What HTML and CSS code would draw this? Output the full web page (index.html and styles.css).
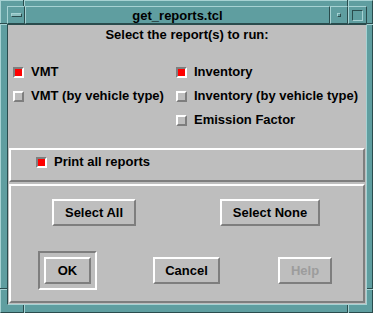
FILE: index.html
```html
<!DOCTYPE html>
<html lang="en">
<head>
    <meta charset="UTF-8">
    <meta name="viewport" content="width=device-width, initial-scale=1.0">
    <title>get_reports.tcl</title>
    <link rel="stylesheet" href="styles.css">
</head>
<body>
    <div class="window">
        <!-- resize handle marks on the window frame -->
        <span class="mark v top left"></span>
        <span class="mark v top right"></span>
        <span class="mark v bottom left"></span>
        <span class="mark v bottom right"></span>
        <span class="mark h side-top left"></span>
        <span class="mark h side-top right"></span>
        <span class="mark h side-bottom left"></span>
        <span class="mark h side-bottom right"></span>

        <div class="titlebar">
            <div class="tb-btn tb-menu"><span class="menu-glyph"></span></div>
            <div class="tb-title">get_reports.tcl</div>
            <div class="tb-btn tb-min"><span class="min-glyph"></span></div>
            <div class="tb-btn tb-max"><span class="max-glyph"></span></div>
        </div>

        <div class="client">
            <div class="heading">Select the report(s) to run:</div>

            <div class="options">
                <div class="opt"><span class="check on"></span><span class="label">VMT</span></div>
                <div class="opt"><span class="check on"></span><span class="label">Inventory</span></div>
                <div class="opt"><span class="check"></span><span class="label">VMT (by vehicle type)</span></div>
                <div class="opt"><span class="check"></span><span class="label">Inventory (by vehicle type)</span></div>
                <div class="opt"></div>
                <div class="opt"><span class="check"></span><span class="label">Emission Factor</span></div>
            </div>

            <div class="frame print-frame">
                <span class="check on"></span><span class="label">Print all reports</span>
            </div>

            <div class="frame actions">
                <div class="btn-row row-select">
                    <button class="btn btn-select-all">Select All</button>
                    <button class="btn btn-select-none">Select None</button>
                </div>
                <div class="btn-row row-dialog">
                    <div class="default-ring"><button class="btn btn-ok">OK</button></div>
                    <button class="btn btn-cancel">Cancel</button>
                    <button class="btn btn-help" disabled>Help</button>
                </div>
            </div>
        </div>
    </div>
</body>
</html>
```

FILE: styles.css
```css
body {
    margin: 0;
    background: #bebebe;
    font-family: 'Liberation Sans', Arial, sans-serif;
    font-size: 13px;
    font-weight: 700;
    color: #000000;
}
.window {
    position: relative;
    width: 373px;
    height: 313px;
    box-sizing: border-box;
    display: flex;
    flex-direction: column;
    background: #5f9ea0;
    border: 1px solid;
    border-color: #a6d2d3 #2a4c4d #2a4c4d #a6d2d3;
    padding: 5px 5px 7px 6px;
}
.mark {
    position: absolute;
    box-sizing: border-box;
}
.mark.v {
    width: 2px;
    border-left: 1px solid #2a4c4d;
    border-right: 1px solid #a6d2d3;
}
.mark.h {
    height: 2px;
    border-top: 1px solid #2a4c4d;
    border-bottom: 1px solid #a6d2d3;
}
.mark.v.top { top: -1px; height: 6px; }
.mark.v.bottom { top: 304px; height: 8px; }
.mark.v.left { left: 22px; }
.mark.v.right { left: 346px; }
.mark.h.side-top { top: 22px; }
.mark.h.side-bottom { top: 287px; }
.mark.h.left { left: -1px; width: 7px; }
.mark.h.right { left: 366px; width: 6px; }

.titlebar {
    display: flex;
    height: 18px;
    flex-shrink: 0;
}
.tb-btn,
.tb-title {
    box-sizing: border-box;
    border: 1px solid;
    border-color: #a6d2d3 #2a4c4d #2a4c4d #a6d2d3;
    display: flex;
    align-items: center;
    justify-content: center;
}
.tb-menu { width: 18px; }
.tb-title {
    flex: 1;
    line-height: 16px;
    padding-top: 1px;
}
.tb-min { width: 18px; }
.tb-max { width: 19px; }
.menu-glyph {
    width: 11px;
    height: 4px;
    box-sizing: border-box;
    border: 1px solid;
    border-color: #a6d2d3 #2a4c4d #2a4c4d #a6d2d3;
    background: #8cc0c1;
}
.min-glyph {
    width: 4px;
    height: 4px;
    box-sizing: border-box;
    border: 1px solid;
    border-color: #a6d2d3 #2a4c4d #2a4c4d #a6d2d3;
}
.max-glyph {
    width: 11px;
    height: 11px;
    box-sizing: border-box;
    border: 1px solid;
    border-color: #2a4c4d #a6d2d3 #a6d2d3 #2a4c4d;
}

.client {
    flex: 1;
    display: flex;
    flex-direction: column;
    background: #bebebe;
    border: 1px solid;
    border-color: #2a4c4d #a6d2d3 #a6d2d3 #2a4c4d;
}
.heading {
    text-align: center;
    line-height: 16px;
    padding-top: 2px;
}
.options {
    display: grid;
    grid-template-columns: 163px 1fr;
    grid-auto-rows: 24px;
    margin-top: 17px;
    padding-left: 5px;
}
.opt {
    display: flex;
    align-items: flex-start;
}
.check {
    width: 11px;
    height: 11px;
    box-sizing: border-box;
    flex-shrink: 0;
    margin-top: 7px;
    border: 2px solid;
    border-color: #ffffff #7e7e7e #7e7e7e #ffffff;
    background: #bebebe;
}
.check.on {
    border-color: #7e7e7e #ffffff #ffffff #7e7e7e;
    background: #ff0000;
}
.label {
    margin-left: 7px;
    margin-top: 4px;
    line-height: 16px;
    white-space: nowrap;
}

.frame {
    box-sizing: border-box;
    border: 2px solid;
    border-color: #ffffff #7e7e7e #7e7e7e #ffffff;
    margin: 0 1px;
}
.print-frame {
    height: 34px;
    margin-top: 16px;
    display: flex;
    align-items: flex-start;
    padding-left: 25px;
}
.actions {
    flex: 1;
    margin-top: 2px;
    margin-bottom: 1px;
    padding-top: 13px;
}
.btn-row {
    display: flex;
    align-items: center;
}
.row-select {
    padding-left: 41px;
    gap: 84px;
}
.row-dialog {
    padding-left: 27px;
    margin-top: 25px;
}
.btn {
    height: 27px;
    box-sizing: border-box;
    padding: 0;
    margin: 0;
    font: inherit;
    color: #000000;
    background: #bebebe;
    border: 2px solid;
    border-color: #ffffff #7e7e7e #7e7e7e #ffffff;
    border-radius: 0;
}
.btn-select-all { width: 84px; }
.btn-select-none { width: 100px; }
.default-ring {
    padding: 4px;
    border: 2px solid;
    border-color: #7e7e7e #ffffff #ffffff #7e7e7e;
    display: flex;
}
.btn-ok { width: 47px; }
.btn-cancel {
    width: 67px;
    margin-left: 56px;
}
.btn-help {
    width: 54px;
    margin-left: 58px;
    color: #9c9c9c;
}
```
